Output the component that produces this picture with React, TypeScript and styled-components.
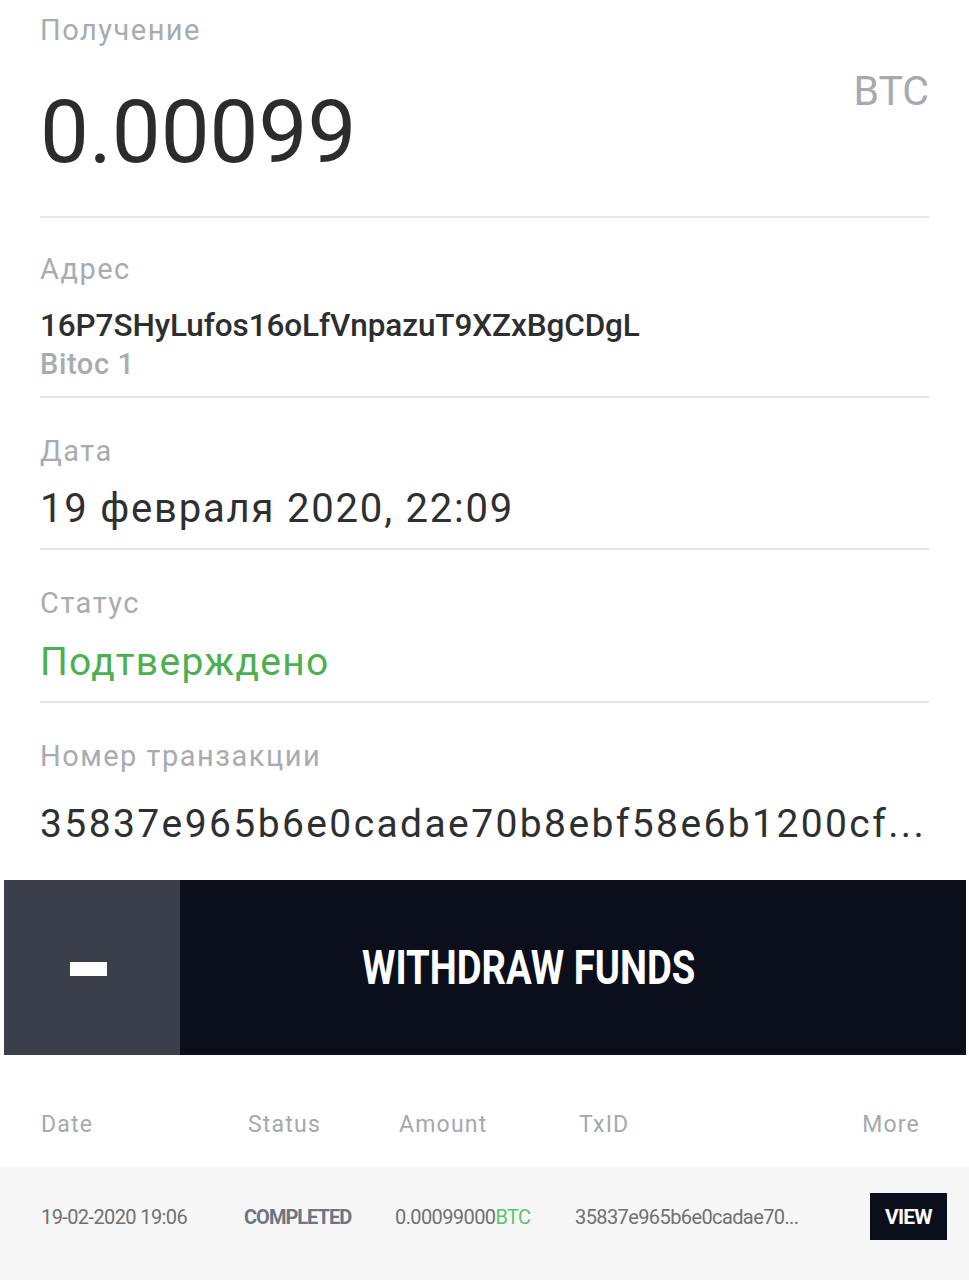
import React from "react";
import styled, { createGlobalStyle } from "styled-components";

const GlobalStyle = createGlobalStyle`
  html, body { margin: 0; padding: 0; background: #ffffff; }
  body {
    font-family: Roboto, "Noto Sans", "Liberation Sans", sans-serif;
    -webkit-font-smoothing: antialiased;
  }
  * { box-sizing: border-box; }
`;

const Page = styled.div`
  width: 969px;
  background: #ffffff;
`;

const Details = styled.div`
  padding: 0 40px;
`;

const Field = styled.section<{ $top: number; $bottom: number; $divider?: boolean }>`
  padding-top: ${(p) => p.$top}px;
  padding-bottom: ${(p) => p.$bottom}px;
  border-bottom: ${(p) => (p.$divider ? "2px solid #e3e5e7" : "none")};
`;

const Label = styled.div<{ $gap?: number }>`
  margin-top: ${(p) => p.$gap ?? 0}px;
  font-size: 29px;
  line-height: 36px;
  font-weight: 400;
  color: #a8acb1;
  letter-spacing: 1.5px;
`;

const SubLabel = styled(Label)`
  font-weight: 500;
  letter-spacing: 0.6px;
`;

const Value = styled.div<{ $size: number; $gap: number; $color?: string; $spacing?: number; $weight?: number }>`
  margin-top: ${(p) => p.$gap}px;
  font-size: ${(p) => p.$size}px;
  line-height: 48px;
  font-weight: ${(p) => p.$weight ?? 400};
  color: ${(p) => p.$color ?? "#2e2f31"};
  letter-spacing: ${(p) => p.$spacing ?? 0}px;
  white-space: nowrap;
`;

const AmountRow = styled.div`
  display: flex;
  justify-content: space-between;
  align-items: flex-start;
`;

const Amount = styled.div`
  margin-top: 41px;
  font-size: 87px;
  line-height: 87px;
  font-weight: 400;
  color: #2b2c2e;
`;

const Currency = styled.div`
  margin-top: 23px;
  font-size: 41px;
  line-height: 41px;
  color: #a6aaaf;
`;

const WithdrawButton = styled.button`
  display: flex;
  width: 962px;
  height: 175px;
  margin: 32px 3px 0 4px;
  padding: 0;
  border: none;
  background: #0b0e1b;
  cursor: pointer;
  font-family: inherit;
`;

const ToggleCell = styled.div`
  width: 176px;
  height: 100%;
  background: #3b3e4b;
  display: flex;
  align-items: center;
  justify-content: center;
  padding-right: 8px;
`;

const Minus = styled.span`
  display: block;
  width: 37px;
  height: 14px;
  background: #ffffff;
  margin-top: 3px;
`;

const ButtonLabel = styled.div`
  flex: 1;
  display: flex;
  align-items: center;
  justify-content: center;
  padding-right: 88px;
`;

const CondensedText = styled.span<{ $scale: number }>`
  display: inline-block;
  transform: scaleX(${(p) => p.$scale});
  transform-origin: center;
  white-space: nowrap;
`;

const ButtonText = styled(CondensedText)`
  font-size: 49px;
  line-height: 49px;
  font-weight: 700;
  color: #ffffff;
`;

const Table = styled.div`
  width: 969px;
`;

const Grid = styled.div`
  display: grid;
  grid-template-columns: 203px 151px 180px 1fr auto;
  align-items: center;
  padding: 0 22px 0 41px;
`;

const HeadRow = styled(Grid)`
  height: 112px;
  padding-top: 26px;
`;

const HeadCell = styled.div<{ $shift?: number; $end?: boolean }>`
  padding-left: ${(p) => p.$shift ?? 0}px;
  margin-right: ${(p) => (p.$end ? 27 : 0)}px;
  justify-self: ${(p) => (p.$end ? "end" : "start")};
  font-size: 23px;
  font-weight: 400;
  letter-spacing: 1.2px;
  color: #a4a9ae;
`;

const BodyRow = styled(Grid)`
  background: #f7f7f7;
  padding-top: 26px;
  padding-bottom: 40px;
`;

const Cell = styled.div<{ $bold?: boolean }>`
  font-size: 20px;
  line-height: 24px;
  font-weight: ${(p) => (p.$bold ? 700 : 400)};
  color: ${(p) => (p.$bold ? "#6c7584" : "#6f7174")};
  letter-spacing: ${(p) => (p.$bold ? -1 : -0.6)}px;
  white-space: nowrap;
`;

const Coin = styled.span`
  color: #5cc46b;
`;

const ViewButton = styled.button`
  justify-self: end;
  width: 77px;
  height: 47px;
  border: none;
  padding: 0;
  background: #0b0e1b;
  color: #ffffff;
  font-family: inherit;
  font-size: 21px;
  font-weight: 700;
  letter-spacing: -0.8px;
  cursor: pointer;
`;

export default function App() {
  return (
    <Page>
      <GlobalStyle />
      <Details>
        <Field $top={12} $bottom={40} $divider>
          <Label>Получение</Label>
          <AmountRow>
            <Amount>0.00099</Amount>
            <Currency>BTC</Currency>
          </AmountRow>
        </Field>

        <Field $top={33} $bottom={14} $divider>
          <Label>Адрес</Label>
          <Value $size={31.5} $gap={15} $weight={500} $spacing={-0.1} $color="#2d2e30">
            16P7SHyLufos16oLfVnpazuT9XZxBgCDgL
          </Value>
          <SubLabel $gap={-4}>Bitoc 1</SubLabel>
        </Field>

        <Field $top={35} $bottom={15} $divider>
          <Label>Дата</Label>
          <Value $size={40} $gap={16} $spacing={1.8}>
            19 февраля 2020, 22:09
          </Value>
        </Field>

        <Field $top={35} $bottom={15} $divider>
          <Label>Статус</Label>
          <Value $size={39} $gap={17} $spacing={1.3} $color="#4cb051">
            Подтверждено
          </Value>
        </Field>

        <Field $top={35} $bottom={0}>
          <Label>Номер транзакции</Label>
          <Value $size={39} $gap={26} $spacing={2.4}>
            35837e965b6e0cadae70b8ebf58e6b1200cf...
          </Value>
        </Field>
      </Details>

      <WithdrawButton type="button">
        <ToggleCell>
          <Minus />
        </ToggleCell>
        <ButtonLabel>
          <ButtonText $scale={0.78}>WITHDRAW FUNDS</ButtonText>
        </ButtonLabel>
      </WithdrawButton>

      <Table>
        <HeadRow>
          <HeadCell>Date</HeadCell>
          <HeadCell $shift={4}>Status</HeadCell>
          <HeadCell $shift={4}>Amount</HeadCell>
          <HeadCell $shift={4}>TxID</HeadCell>
          <HeadCell $end>More</HeadCell>
        </HeadRow>
        <BodyRow>
          <Cell>19-02-2020 19:06</Cell>
          <Cell $bold>COMPLETED</Cell>
          <Cell>
            0.00099000<Coin>BTC</Coin>
          </Cell>
          <Cell>35837e965b6e0cadae70...</Cell>
          <ViewButton type="button">VIEW</ViewButton>
        </BodyRow>
      </Table>
    </Page>
  );
}
